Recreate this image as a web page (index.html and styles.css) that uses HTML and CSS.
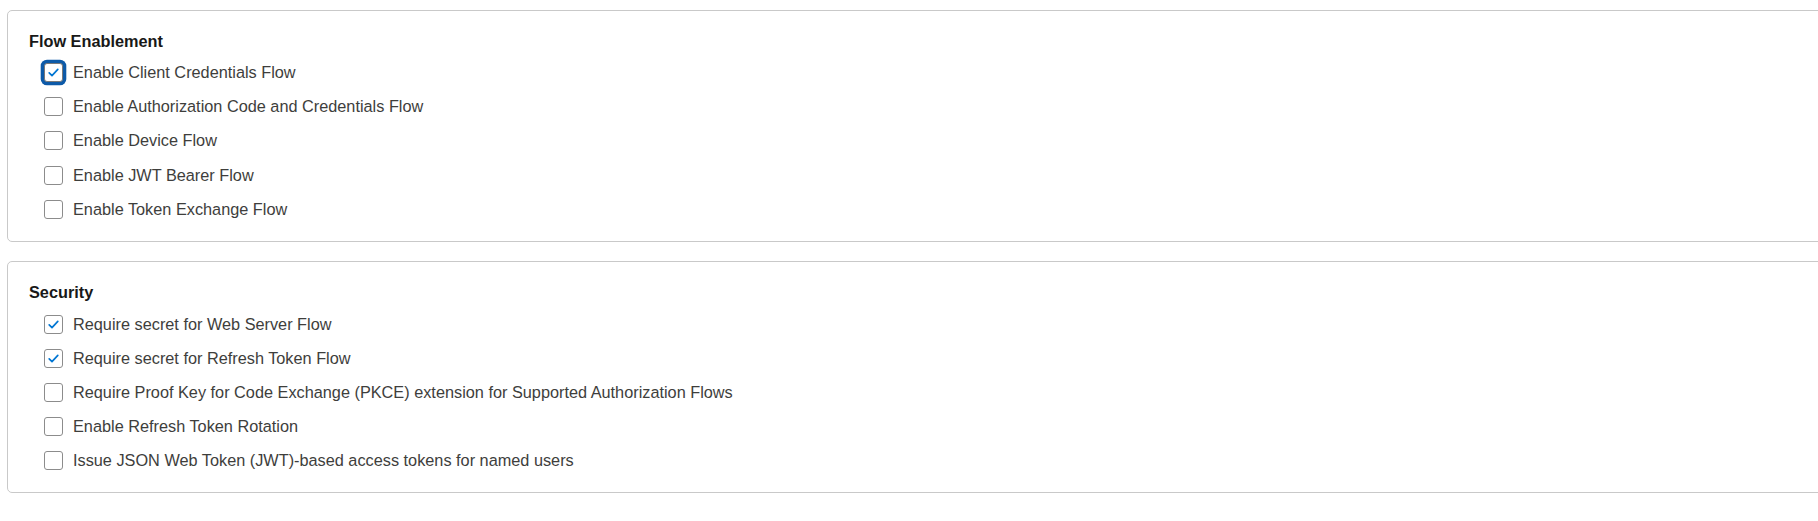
FILE: index.html
```html
<!DOCTYPE html>
<html lang="en">
<head>
<meta charset="utf-8">
<title>OAuth Settings</title>
<link rel="stylesheet" href="styles.css">
</head>
<body>
<div class="page">
  <section class="card">
    <h2 class="card-title">Flow Enablement</h2>
    <ul class="options">
      <li class="option">
        <span class="box is-checked is-focused"><svg class="check" viewBox="0 0 19 19" width="19" height="19"><path d="M5.2 9.8 L8 12.6 L13.8 6.4"/></svg></span>
        <span class="label">Enable Client Credentials Flow</span>
      </li>
      <li class="option">
        <span class="box"></span>
        <span class="label">Enable Authorization Code and Credentials Flow</span>
      </li>
      <li class="option">
        <span class="box"></span>
        <span class="label">Enable Device Flow</span>
      </li>
      <li class="option">
        <span class="box"></span>
        <span class="label">Enable JWT Bearer Flow</span>
      </li>
      <li class="option">
        <span class="box"></span>
        <span class="label">Enable Token Exchange Flow</span>
      </li>
    </ul>
  </section>

  <section class="card">
    <h2 class="card-title">Security</h2>
    <ul class="options">
      <li class="option">
        <span class="box is-checked"><svg class="check" viewBox="0 0 19 19" width="19" height="19"><path d="M5.2 9.8 L8 12.6 L13.8 6.4"/></svg></span>
        <span class="label">Require secret for Web Server Flow</span>
      </li>
      <li class="option">
        <span class="box is-checked"><svg class="check" viewBox="0 0 19 19" width="19" height="19"><path d="M5.2 9.8 L8 12.6 L13.8 6.4"/></svg></span>
        <span class="label">Require secret for Refresh Token Flow</span>
      </li>
      <li class="option">
        <span class="box"></span>
        <span class="label">Require Proof Key for Code Exchange (PKCE) extension for Supported Authorization Flows</span>
      </li>
      <li class="option">
        <span class="box"></span>
        <span class="label">Enable Refresh Token Rotation</span>
      </li>
      <li class="option">
        <span class="box"></span>
        <span class="label">Issue JSON Web Token (JWT)-based access tokens for named users</span>
      </li>
    </ul>
  </section>
</div>
</body>
</html>
```

FILE: styles.css
```css
html, body {
  margin: 0;
  padding: 0;
  background: #ffffff;
  overflow: hidden;
}

body {
  font-family: "Liberation Sans", Arial, sans-serif;
  font-size: 16.3px;
  color: #3e3e3c;
}

.page {
  width: 1840px;
  padding: 10px 0 0 7px;
  display: flex;
  flex-direction: column;
  gap: 19.5px;
}

.card {
  border: 1px solid #c9c9c9;
  border-radius: 5px;
  padding: 20px 0 14.5px 21px;
  background: #ffffff;
}

.card-title {
  margin: 0 0 4.5px 0;
  font-size: 16.3px;
  line-height: 20px;
  font-weight: 700;
  color: #181818;
}

.options {
  list-style: none;
  margin: 0;
  padding: 0 0 0 14.5px;
}

.option {
  height: 34.2px;
  display: flex;
  align-items: center;
  gap: 10.5px;
}

.box {
  box-sizing: border-box;
  width: 19px;
  height: 19px;
  flex: 0 0 19px;
  border: 1px solid #8c8c8c;
  border-radius: 3px;
  background: #ffffff;
  position: relative;
}

.box.is-focused {
  border-color: #7a7a7a;
  box-shadow: 0 0 0 3.3px #0d5aa8;
}

.check {
  position: absolute;
  left: -1px;
  top: -1px;
  fill: none;
  stroke: #0176d3;
  stroke-width: 1.7;
  stroke-linecap: round;
  stroke-linejoin: round;
}

.label {
  line-height: normal;
  white-space: nowrap;
}
```
